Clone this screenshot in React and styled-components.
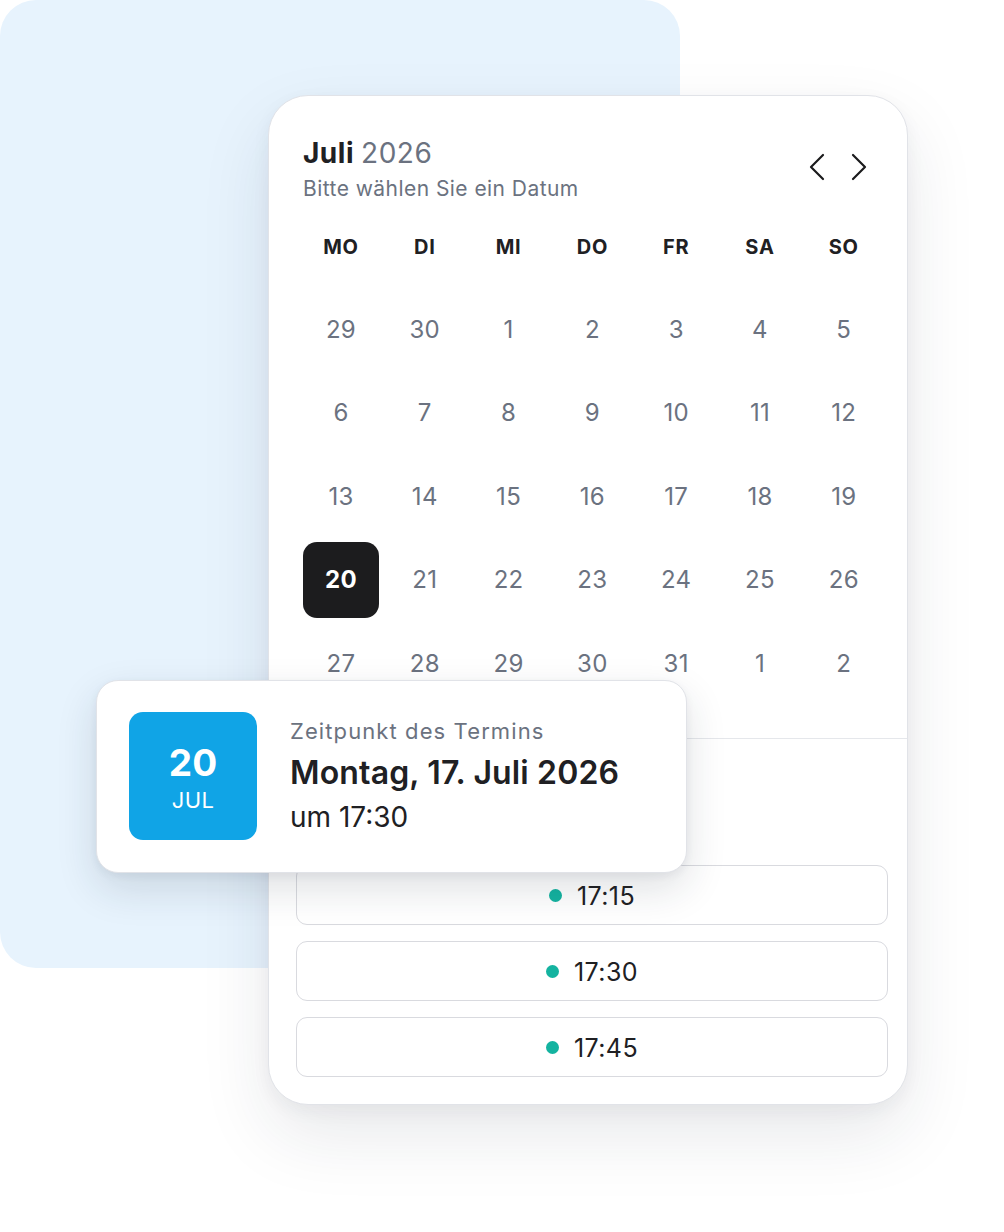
import React from "react";
import styled, { createGlobalStyle } from "styled-components";

const GlobalStyle = createGlobalStyle`
  html, body { margin: 0; padding: 0; background: #ffffff; }
  body { font-family: Inter, "Noto Sans", "Liberation Sans", sans-serif; color: #1f1f22; }
  * { box-sizing: border-box; }
`;

const Stage = styled.div`
  position: relative;
  width: 1004px;
  height: 1232px;
  overflow: hidden;
  padding: 95px 0 0 268px;
`;

const Backdrop = styled.div`
  position: absolute;
  left: 0;
  top: 0;
  width: 680px;
  height: 968px;
  border-radius: 36px;
  background: #e7f3fd;
`;

const Card = styled.div`
  position: relative;
  width: 640px;
  height: 1010px;
  background: #ffffff;
  border: 1px solid #e1e3e8;
  border-radius: 40px;
  box-shadow: 0 30px 70px rgba(30, 40, 60, 0.10), 0 6px 18px rgba(30, 40, 60, 0.05);
  display: flex;
  flex-direction: column;
`;

const CalendarSection = styled.section`
  padding: 40px 26px 37px 34px;
  border-bottom: 1px solid #e5e7eb;
`;

const Header = styled.div`
  display: flex;
  justify-content: space-between;
  align-items: flex-start;
`;

const Title = styled.h2`
  margin: 0;
  font-size: 28px;
  line-height: 34px;
  font-weight: 700;
  color: #202023;
  letter-spacing: 0.5px;

  span {
    font-weight: 400;
    color: #6b7280;
  }
`;

const Subtitle = styled.p`
  margin: 7px 0 0;
  font-size: 21px;
  line-height: 24px;
  color: #6b7280;
  letter-spacing: 0.45px;
`;

const NavGroup = styled.div`
  display: flex;
  gap: 18px;
  margin-top: 17px;
  margin-right: 10px;
`;

const NavButton = styled.button`
  border: 0;
  background: none;
  padding: 0;
  width: 24px;
  height: 28px;
  display: flex;
  align-items: center;
  justify-content: center;
  cursor: pointer;
  color: #1b1b1d;
`;

const WeekGrid = styled.div`
  display: grid;
  grid-template-columns: repeat(7, 76px);
  column-gap: 7.8px;
  row-gap: 7.6px;
  margin-top: ${(p) => p.$mt}px;
`;

const WeekdayLabel = styled.div`
  height: 28px;
  display: flex;
  align-items: center;
  justify-content: center;
  font-size: 20px;
  font-weight: 700;
  letter-spacing: 0.8px;
  color: #202023;
`;

const DayCell = styled.div`
  height: 76px;
  display: flex;
  align-items: center;
  justify-content: center;
  border-radius: 14px;
  font-size: 24px;
  letter-spacing: 0.3px;
  font-weight: ${(p) => (p.$selected ? 700 : 400)};
  color: ${(p) => (p.$selected ? "#ffffff" : "#6b7280")};
  background: ${(p) => (p.$selected ? "#1c1c1e" : "transparent")};
`;

const TimesSection = styled.section`
  padding: 126px 19px 27px 27px;
  display: flex;
  flex-direction: column;
  gap: 16px;
`;

const TimeSlot = styled.button`
  height: 60px;
  border: 1.5px solid #d9dadf;
  border-radius: 11px;
  background: #ffffff;
  display: flex;
  align-items: center;
  justify-content: center;
  gap: 15px;
  font-family: inherit;
  font-size: 25px;
  letter-spacing: 0.4px;
  color: #202023;
  padding: 1px 0 0;
`;

const Dot = styled.span`
  width: 13px;
  height: 13px;
  border-radius: 50%;
  background: #14b3a0;
`;

const Summary = styled.div`
  position: absolute;
  left: -173px;
  top: 584px;
  width: 591px;
  height: 193px;
  background: #ffffff;
  border: 1px solid #e1e3e8;
  border-radius: 22px;
  box-shadow: 0 16px 40px rgba(30, 40, 60, 0.14), 0 3px 8px rgba(30, 40, 60, 0.06);
  padding: 31px 32px;
  display: flex;
  gap: 33px;
`;

const DateBadge = styled.div`
  width: 128px;
  height: 128px;
  border-radius: 14px;
  background: #10a4e6;
  color: #ffffff;
  display: flex;
  flex-direction: column;
  align-items: center;
  justify-content: center;
  flex-shrink: 0;
`;

const BadgeDay = styled.div`
  font-size: 37px;
  line-height: 42px;
  font-weight: 700;
  margin-top: 2px;
`;

const BadgeMonth = styled.div`
  font-size: 22px;
  line-height: 26px;
  margin-top: 3px;
  letter-spacing: 0.4px;
`;

const SummaryText = styled.div`
  display: flex;
  flex-direction: column;
`;

const SummaryLabel = styled.div`
  font-size: 22px;
  line-height: 28px;
  color: #6b7280;
  letter-spacing: 1.1px;
  margin-top: 5px;
`;

const SummaryDate = styled.div`
  font-size: 32px;
  line-height: 40px;
  font-weight: 600;
  letter-spacing: 0.15px;
  color: #202023;
  margin-top: 8px;
`;

const SummaryTime = styled.div`
  font-size: 28px;
  line-height: 34px;
  color: #202023;
  margin-top: 7px;
`;

const Chevron = ({ dir }) => (
  <svg width="16" height="28" viewBox="0 0 16 28" fill="none">
    <polyline
      points={dir === "left" ? "14,2 2,14 14,26" : "2,2 14,14 2,26"}
      stroke="currentColor"
      strokeWidth="2.2"
      strokeLinecap="round"
      strokeLinejoin="round"
    />
  </svg>
);

const weekdays = ["MO", "DI", "MI", "DO", "FR", "SA", "SO"];
const days = [
  29, 30, 1, 2, 3, 4, 5,
  6, 7, 8, 9, 10, 11, 12,
  13, 14, 15, 16, 17, 18, 19,
  20, 21, 22, 23, 24, 25, 26,
  27, 28, 29, 30, 31, 1, 2,
];
const times = ["17:15", "17:30", "17:45"];

export default function App() {
  return (
    <>
      <GlobalStyle />
      <Stage>
        <Backdrop />
        <Card>
          <CalendarSection>
            <Header>
              <div>
                <Title>
                  Juli <span>2026</span>
                </Title>
                <Subtitle>Bitte wählen Sie ein Datum</Subtitle>
              </div>
              <NavGroup>
                <NavButton aria-label="Vorheriger Monat">
                  <Chevron dir="left" />
                </NavButton>
                <NavButton aria-label="Nächster Monat">
                  <Chevron dir="right" />
                </NavButton>
              </NavGroup>
            </Header>
            <WeekGrid $mt={32}>
              {weekdays.map((d) => (
                <WeekdayLabel key={d}>{d}</WeekdayLabel>
              ))}
            </WeekGrid>
            <WeekGrid $mt={30}>
              {days.map((d, i) => (
                <DayCell key={i} $selected={i === 21}>
                  {d}
                </DayCell>
              ))}
            </WeekGrid>
          </CalendarSection>
          <TimesSection>
            {times.map((t) => (
              <TimeSlot key={t}>
                <Dot />
                {t}
              </TimeSlot>
            ))}
          </TimesSection>
          <Summary>
            <DateBadge>
              <BadgeDay>20</BadgeDay>
              <BadgeMonth>JUL</BadgeMonth>
            </DateBadge>
            <SummaryText>
              <SummaryLabel>Zeitpunkt des Termins</SummaryLabel>
              <SummaryDate>Montag, 17. Juli 2026</SummaryDate>
              <SummaryTime>um 17:30</SummaryTime>
            </SummaryText>
          </Summary>
        </Card>
      </Stage>
    </>
  );
}
